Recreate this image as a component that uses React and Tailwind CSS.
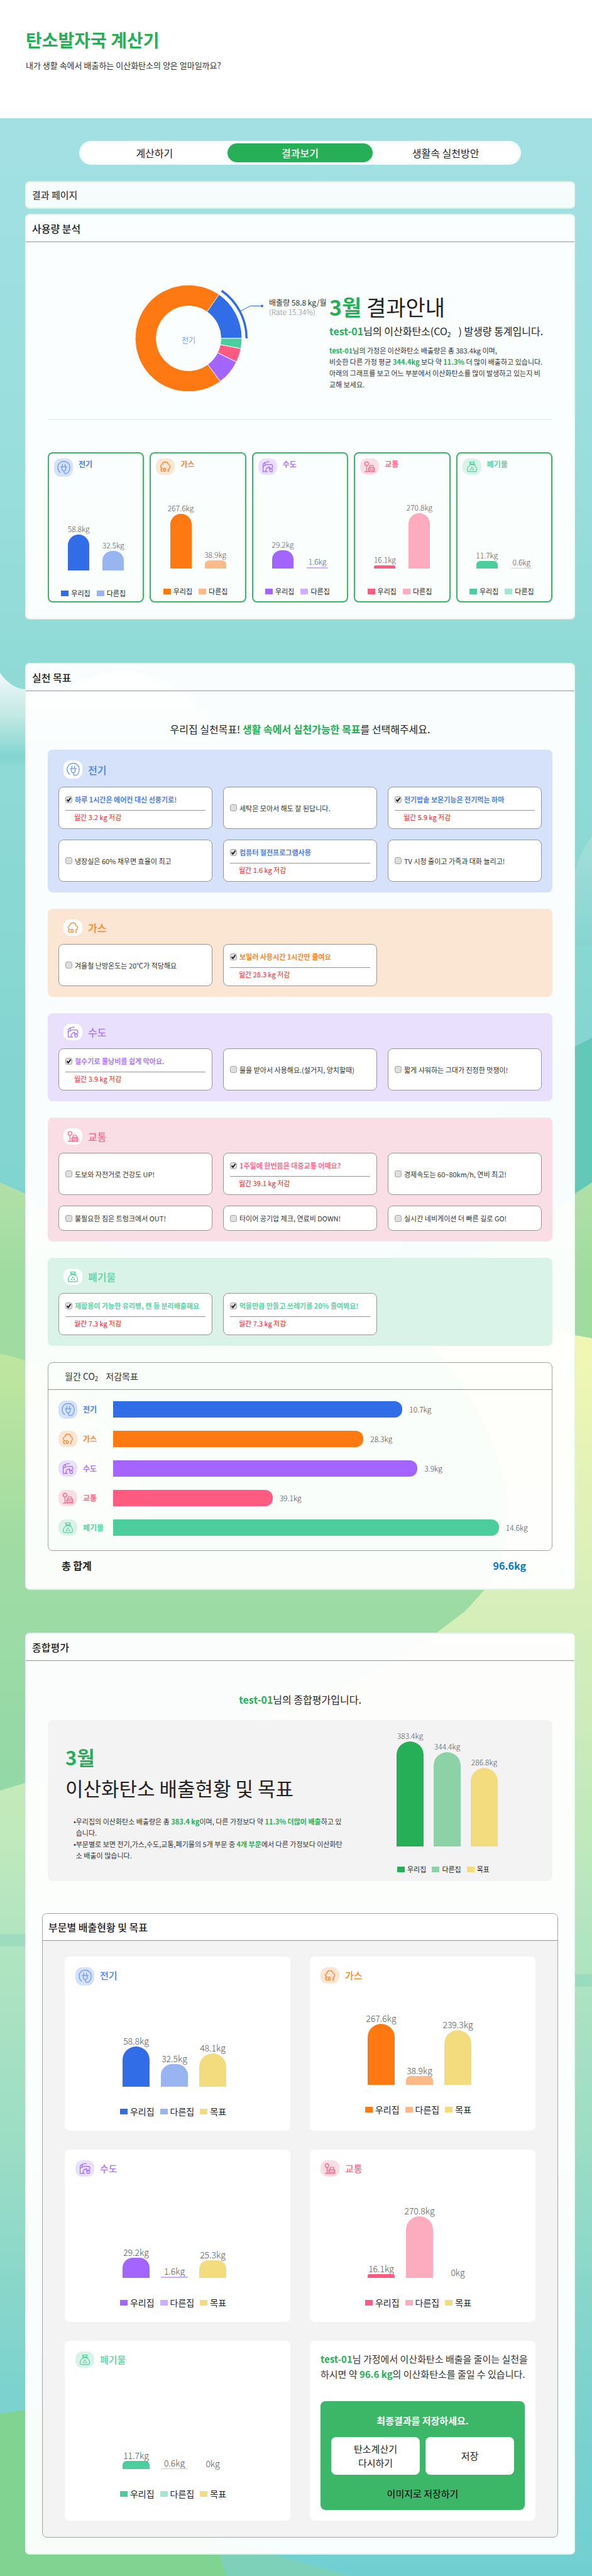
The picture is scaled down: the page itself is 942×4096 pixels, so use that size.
import React from "react";

const ICONS = {
  elec: (
    <>
      <path d="M5.6 20.6A11 11 0 1 1 23 12c0 6-3.4 11-7.6 11-2.6 0-3-2-3.2-4.6" />
      <path d="M9.6 6v4.2M14.4 6v4.2M6.5 10.5h11M8.500 10.500V14a3.500 3.500 0 0 0 3.500 3.800 3.500 3.500 0 0 0 3.500-3.800v-3.500" />
    </>
  ),
  gas: (
    <>
      <path d="M3.600 14.200C1 12.200 2.400 7.800 5.400 7.600 6 4 8.600 1.800 12 1.800s6 2.200 6.400 5.800c3.400.4 4.400 4.200 2.600 6.400-.4 1.400-.6 2-1.600 2.600" />
      <text x="1.500" y="23" fontSize="9" fontWeight="900" fill="currentColor" stroke="none">CO</text>
      <text x="16.300" y="22.600" fontSize="7" fontWeight="900" fill="currentColor" stroke="none">2</text>
    </>
  ),
  water: (
    <>
      <path d="M15 1.500C8.500 1.500 2 4.500 2 8.500V22.500h9.500M2 12.500C5.500 8.500 9.500 7 14 7.500h4.500c2.500 0 4 1.500 4 4v3.500h-7M6.500 10V4.500M8 22.500c0-6 2.500-9.500 7.500-10" />
      <circle cx="19" cy="19.800" r="3" />
      <path d="M15.500 12.500v4" />
    </>
  ),
  traffic: (
    <>
      <circle cx="5.800" cy="5.800" r="4" />
      <path d="M5.800 9.800V22M2 22.500h21M9.500 20v-4l2-2 1.600-4.600h6l1.600 4.600 2 2v4zM11.500 14h9.500M9.500 17h13.200M11 20v2M21 20v2" />
    </>
  ),
  waste: (
    <>
      <path d="M8.500 6.500 6.800 2h10.400l-2 4.500M7.500 7.800h9M9 5l3 1.600L17 5M8.500 8.500C4 11 2 14.500 2 18c0 3 1.400 4.500 4 4.500h12c2.600 0 4-1.500 4-4.500 0-3.500-2-7-6.500-9.500l3.500-1" />
      <path d="m10.700 14.500 1.300-2 1.500 2.200M9.200 16.300l-1 2h2.500M14.800 16.500l1 1.800h-2.600" />
    </>
  ),
};

const CATS = {
  elec: { name: "전기", text: "text-[#4a80ea]", icon: "text-[#6b9bf5]", soft: "bg-[#d5e2f9]", fill: "bg-[#306de6]", light: "bg-[#98b5f2]", tall: true },
  gas: { name: "가스", text: "text-[#ff8426]", icon: "text-[#ff7a14]", soft: "bg-[#fbe5d3]", fill: "bg-[#ff7912]", light: "bg-[#fdb987]" },
  water: { name: "수도", text: "text-[#ad75ff]", icon: "text-[#a564ff]", soft: "bg-[#e9e0fe]", fill: "bg-[#a464ff]", light: "bg-[#ceaeff]" },
  traffic: { name: "교통", text: "text-[#ff6a8d]", icon: "text-[#ff5a80]", soft: "bg-[#fadee5]", fill: "bg-[#ff5b80]", light: "bg-[#fdabbf]" },
  waste: { name: "폐기물", text: "text-[#5bd1a5]", icon: "text-[#4bcd9d]", soft: "bg-[#daf3e8]", fill: "bg-[#4bcd9d]", light: "bg-[#a3e5cd]" },
};

const GREEN = "font-bold text-[#26af57]";

function Badge({ cat, bg }) {
  const c = CATS[cat];
  return (
    <span className={`flex w-[30px] shrink-0 items-center justify-center rounded-[11px] ${c.tall ? "h-[29px]" : "h-[26px]"} ${bg || c.soft}`}>
      <svg viewBox="0 0 24 24" className={`${c.tall ? "size-[21px]" : "size-[18px]"} ${c.icon}`} fill="none" stroke="currentColor" strokeWidth="1.5" strokeLinecap="round" strokeLinejoin="round" aria-hidden="true">
        {ICONS[cat]}
      </svg>
    </span>
  );
}

function Bars({ bars, wide, gap, label, area }) {
  const w = wide ? 43 : 34;
  return (
    <div className={`flex items-end justify-center ${gap} ${area}`}>
      {bars.map(([value, h, color], i) => (
        <div key={i} className={`flex flex-col items-center ${wide ? "w-[43px]" : "w-[34px]"}`}>
          <span className={`whitespace-nowrap leading-4 font-light text-[#555] ${label}`}>{value}</span>
          <div
            className={`mt-px w-full ${color}`}
            style={{ height: h, borderTopLeftRadius: Math.min(w / 2, h / 2), borderTopRightRadius: Math.min(w / 2, h / 2) }}
          />
        </div>
      ))}
    </div>
  );
}

function Legend({ items, className }) {
  return (
    <ul className={`flex justify-center ${className}`}>
      {items.map(([name, color]) => (
        <li key={name} className="flex items-center gap-1 text-[#222]">
          <span className={`h-[9px] w-3 ${color}`} />
          {name}
        </li>
      ))}
    </ul>
  );
}

const USAGE = [
  ["elec", "58.8kg", 57, "32.5kg", 31],
  ["gas", "267.6kg", 87, "38.9kg", 13],
  ["water", "29.2kg", 29, "1.6kg", 2],
  ["traffic", "16.1kg", 5, "270.8kg", 88],
  ["waste", "11.7kg", 12, "0.6kg", 1],
];

const GOALS = [
  ["elec", [
    ["하루 1시간은 에어컨 대신 선풍기로!", "3.2"],
    ["세탁은 모아서 해도 잘 된답니다."],
    ["전기밥솥 보온기능은 전기먹는 하마", "5.9"],
    ["냉장실은 60% 채우면 효율이 최고"],
    ["컴퓨터 절전프로그램사용", "1.6"],
    ["TV 시청 줄이고 가족과 대화 늘리고!"],
  ]],
  ["gas", [["겨울철 난방온도는 20℃가 적당해요"], ["보일러 사용시간 1시간만 줄여요", "28.3"]]],
  ["water", [
    ["절수기로 물낭비를 쉽게 막아요.", "3.9"],
    ["물을 받아서 사용해요.(설거지, 양치할때)"],
    ["짧게 샤워하는 그대가 진정한 멋쟁이!"],
  ]],
  ["traffic", [
    ["도보와 자전거로 건강도 UP!"],
    ["1주일에 한번쯤은 대중교통 어때요?", "39.1"],
    ["경제속도는 60~80km/h, 연비 최고!"],
    ["불필요한 짐은 트렁크에서 OUT!"],
    ["타이어 공기압 체크, 연료비 DOWN!"],
    ["실시간 네비게이션 더 빠른 길로 GO!"],
  ]],
  ["waste", [
    ["재활용이 가능한 유리병, 캔 등 분리배출해요", "7.3"],
    ["먹을만큼 만들고 쓰레기를 20% 줄여봐요!", "7.3"],
  ]],
];

const REDUCTION = [
  ["elec", "10.7kg", 67.5],
  ["gas", "28.3kg", 58.4],
  ["water", "3.9kg", 71],
  ["traffic", "39.1kg", 37.2],
  ["waste", "14.6kg", 90],
];

const YELLOW = "bg-[#f3dc7d]";
const SECTORS = [
  ["elec", ["58.8kg", 64], ["32.5kg", 36], ["48.1kg", 53]],
  ["gas", ["267.6kg", 97], ["38.9kg", 14], ["239.3kg", 87]],
  ["water", ["29.2kg", 32], ["1.6kg", 2], ["25.3kg", 28]],
  ["traffic", ["16.1kg", 6], ["270.8kg", 98], ["0kg", 0]],
  ["waste", ["11.7kg", 13], ["0.6kg", 1], ["0kg", 0]],
];

function Goal({ id, cat, label, kg }) {
  return (
    <li className="flex min-h-[40px] flex-col justify-center rounded-lg border border-[#969696] bg-white px-[10px] text-[11px] leading-5">
      <div className={`flex items-center gap-1 whitespace-nowrap ${kg ? "pt-[9px]" : ""}`}>
        <span className="relative flex">
          <input id={id} type="checkbox" defaultChecked={!!kg} className="peer size-[11px] appearance-none rounded-[3px] border border-[#a8a8a8] bg-[#dedede]" />
          <svg viewBox="0 0 11 11" className="pointer-events-none absolute inset-0 hidden size-[11px] peer-checked:block" fill="none" stroke="#222" strokeWidth="2" aria-hidden="true">
            <path d="M2.500 5.500 4.600 8 8.600 2.500" />
          </svg>
        </span>
        <label htmlFor={id} className={kg ? `font-bold ${CATS[cat].text}` : "text-[#333]"}>{label}</label>
      </div>
      {kg && <p className="mt-[7px] border-t border-[#969696] pb-2 pl-[14px] text-[#fb1b1b]">월간 {kg} kg 저감</p>}
    </li>
  );
}

function Sub2() {
  return <sub className="mr-3 align-baseline text-[10px] leading-none">2</sub>;
}

function arc(a0, a1, ro, ri) {
  const p = (a, r) => {
    const t = (a * Math.PI) / 180;
    return `${(92 + r * Math.cos(t)).toFixed(2)} ${(98 - r * Math.sin(t)).toFixed(2)}`;
  };
  const big = a1 - a0 > 180 ? 1 : 0;
  return `M${p(a0, ro)}A${ro} ${ro} 0 ${big} 0 ${p(a1, ro)}L${p(a1, ri)}A${ri} ${ri} 0 ${big} 1 ${p(a0, ri)}Z`;
}

function Donut() {
  const slices = [
    [0, 55.2, "#306de6"],
    [55.2, 306.4, "#ff7912"],
    [306.4, 333.8, "#a464ff"],
    [333.8, 349, "#ff5b80"],
    [349, 360, "#4bcd9d"],
  ];
  return (
    <svg viewBox="0 0 316 200" className="h-[200px] w-[316px] shrink-0" role="img" aria-label="사용량 비율">
      {slices.map(([a, b, c]) => (
        <path key={c} d={arc(a, b, 85, 51.5)} fill={c} stroke="#fafefe" strokeWidth="1" />
      ))}
      <path d={arc(0, 55.2, 94, 90.5)} fill="#306de6" />
      <path d="M175 54.500 190.500 46.500H209" fill="none" stroke="#306de6" />
      <circle cx="209" cy="46.500" r="2" fill="#306de6" />
      <text x="92" y="106" fontSize="12" fontWeight="300" textAnchor="middle" fill="#306de6">전기</text>
      <text x="220" y="46" fontSize="12" fill="#333">배출량 58.8 kg/월</text>
      <text x="220" y="61" fontSize="12" fontWeight="300" fill="#888">(Rate 15.34%)</text>
    </svg>
  );
}

function Backdrop() {
  return (
    <svg viewBox="0 188 942 3908" preserveAspectRatio="none" className="absolute inset-0 h-full w-full" aria-hidden="true">
      <defs>
        <linearGradient id="sky" gradientUnits="userSpaceOnUse" x1="0" y1="188" x2="0" y2="1900">
          <stop offset="0" stopColor="#a2e0e4" />
          <stop offset=".25" stopColor="#9bdfdf" />
          <stop offset=".5" stopColor="#91dbd7" />
          <stop offset="1" stopColor="#80d4d0" />
        </linearGradient>
        <linearGradient id="mist" gradientUnits="userSpaceOnUse" x1="0" y1="1070" x2="0" y2="1217">
          <stop offset="0" stopColor="#f0f9f8" />
          <stop offset=".5" stopColor="#bde7e3" />
          <stop offset=".92" stopColor="#80d4d1" />
          <stop offset="1" stopColor="#8cd9d4" />
        </linearGradient>
        <linearGradient id="haze" gradientUnits="userSpaceOnUse" x1="0" y1="1330" x2="0" y2="1503">
          <stop offset="0" stopColor="#a3ded9" />
          <stop offset="1" stopColor="#86d5d1" />
        </linearGradient>
        <linearGradient id="field" gradientUnits="userSpaceOnUse" x1="0" y1="1880" x2="0" y2="2850">
          <stop offset="0" stopColor="#b1e0a7" />
          <stop offset=".15" stopColor="#a0dca0" />
          <stop offset=".6" stopColor="#a0dca4" />
          <stop offset="1" stopColor="#93d8a7" />
        </linearGradient>
        <linearGradient id="knoll" gradientUnits="userSpaceOnUse" x1="0" y1="2153" x2="0" y2="2480">
          <stop offset="0" stopColor="#c0e69f" />
          <stop offset="1" stopColor="#9edba3" />
        </linearGradient>
        <linearGradient id="meadow" gradientUnits="userSpaceOnUse" x1="0" y1="2128" x2="0" y2="4096">
          <stop offset="0" stopColor="#f1f7b2" />
          <stop offset=".2" stopColor="#d9efba" />
          <stop offset=".4" stopColor="#c0e9bc" />
          <stop offset=".48" stopColor="#b2e5c0" />
          <stop offset=".65" stopColor="#9cddc5" />
          <stop offset=".84" stopColor="#7dd3ce" />
          <stop offset="1" stopColor="#70cfd1" />
        </linearGradient>
      </defs>
      <rect y="188" width="942" height="1900" fill="url(#sky)" />
      <path d="M0 1070C12 1086 24 1095 40 1096c60 6 100-27 155-27 100 0 130 80 230 148H0z" fill="url(#mist)" />
      <path d="M942 1330C930 1345 920 1366 915 1385L890 1503H942z" fill="url(#haze)" />
      <path d="M942 1650 915 1664C800 1760 600 1950 560 2200H942z" fill="#62c8b7" />
      <path d="M0 1880 40 1898C260 2090 700 2090 915 1898L942 1880V3000H0z" fill="url(#field)" />
      <path d="M0 2153C30 2156 200 2200 260 2480H0z" fill="url(#knoll)" />
      <path d="M942 2128 915 2123C850 2100 700 2070 600 2060 760 2180 870 2400 771 2528L740 2562 695 2596C500 2740 200 2790 40 2835L0 2847V4096H942z" fill="url(#meadow)" />
      <path d="M0 3075H60V3095H0zM890 3139H942V3159H890z" fill="#84d3bf" opacity=".45" />
      <path d="M0 3838 40 3832C230 3800 340 3980 350 4062L360 4096H0z" fill="#80d391" />
      <path d="M350 4062 360 4096H559L436 4062C400 4050 380 4046 345 4044z" fill="#7ed1b9" />
    </svg>
  );
}

const PANEL = "rounded-[7px] border border-t-2 border-b-2 border-[#e2f3ea] bg-white/95";
const PANEL_TITLE = "flex items-center border-b border-[#929898] pl-[10px] text-[16px] font-medium text-[#1c1c1c]";

export default function App() {
  return (
    <div className="font-['Noto_Sans_CJK_KR','Noto_Sans',sans-serif] text-[#222]">
      <header className="h-[188px] bg-white pt-[43px] pl-[41px]">
        <h1 className="text-[28px] leading-10 font-bold text-[#26af57]">탄소발자국 계산기</h1>
        <p className="mt-[11px] text-[13px] leading-5 text-[#333]">내가 생활 속에서 배출하는 이산화탄소의 양은 얼마일까요?</p>
      </header>

      <div className="relative">
        <Backdrop />
        <main className="relative pt-9 pr-[27px] pb-[34px] pl-[40px]">
          <nav className="mx-auto grid max-w-[703px] grid-cols-3 rounded-[19px] bg-white/90 p-1 text-center text-[16px] leading-[30px]">
            <a href="#calc" className="rounded-[15px] bg-white">계산하기</a>
            <a href="#result" className="rounded-[15px] bg-[#26af57] font-medium text-white">결과보기</a>
            <a href="#tips" className="rounded-[15px] bg-white">생활속 실천방안</a>
          </nav>

          <h2 className="mt-[26px] flex h-[44px] items-center rounded-[7px] border border-t-2 border-b-2 border-[#dff0df] bg-white/90 pl-[10px] text-[15px] font-medium text-[#444]">결과 페이지</h2>

          <section className={`mt-2 ${PANEL}`}>
            <h2 className={`${PANEL_TITLE} h-[43px]`}>사용량 분석</h2>
            <div className="px-[35px] pb-[25px]">
              <div className="flex border-b-2 border-[#e6f3f2]">
                <div className="flex w-[448px] shrink-0 justify-end pt-[55px]">
                  <Donut />
                </div>
                <div className="pt-[81px] pb-[46px] whitespace-nowrap">
                  <h3 className="text-[34px] leading-[44px]"><b className={GREEN}>3월</b> 결과안내</h3>
                  <p className="mt-1 text-[16px] leading-6"><b className={GREEN}>test-01</b>님의 이산화탄소(CO<Sub2 />) 발생량 통계입니다.</p>
                  <p className="mt-[10px] text-[11px] leading-[18px] text-[#333]">
                    <b className={GREEN}>test-01</b>님의 가정은 이산화탄소 배출량은 총 383.4kg 이며,<br />
                    비슷한 다른 가정 평균 <b className={GREEN}>344.4kg</b> 보다 약 <b className={GREEN}>11.3%</b> 더 많이 배출하고 있습니다.<br />
                    아래의 그래프를 보고 어느 부분에서 이산화탄소를 많이 발생하고 있는지 비<br />
                    교해 보세요.
                  </p>
                </div>
              </div>
              <div className="mt-[51px] grid grid-cols-5 gap-[9px]">
                {USAGE.map(([cat, v1, h1, v2, h2]) => (
                  <article key={cat} className="h-[239px] rounded-[8px] border-2 border-[#3bb566] p-2">
                    <div className="flex items-start gap-[9px]">
                      <Badge cat={cat} />
                      <h4 className={`text-[12px] leading-[18px] font-bold ${CATS[cat].text}`}>{CATS[cat].name}</h4>
                    </div>
                    <Bars gap="gap-[21px]" label="text-[12px]" area="h-[149px]" bars={[[v1, h1, CATS[cat].fill], [v2, h2, CATS[cat].light]]} />
                    <Legend className="mt-7 gap-[10px] pr-2 text-[11px] leading-4" items={[["우리집", CATS[cat].fill], ["다른집", CATS[cat].light]]} />
                  </article>
                ))}
              </div>
            </div>
          </section>

          <section className={`mt-[69px] ${PANEL}`}>
            <h2 className={`${PANEL_TITLE} h-[43px]`}>실천 목표</h2>
            <div className="px-[35px] pb-[25px]">
              <p className="pt-[48px] text-center text-[16px] leading-6">우리집 실천목표! <b className={GREEN}>생활 속에서 실천가능한 목표</b>를 선택해주세요.</p>
              <div className="mt-[21px] flex flex-col gap-[26px]">
                {GOALS.map(([cat, list]) => (
                  <section key={cat} className={`rounded-lg p-[17px] ${CATS[cat].soft}`}>
                    <div className="flex items-center gap-[9px] pl-2">
                      <Badge cat={cat} bg="bg-white" />
                      <h3 className={`text-[16px] leading-6 font-medium ${CATS[cat].text}`}>{CATS[cat].name}</h3>
                    </div>
                    <ul className="mt-[13px] grid grid-cols-3 gap-[17px]">
                      {list.map(([label, kg], i) => (
                        <Goal key={label} id={`${cat}-${i}`} cat={cat} label={label} kg={kg} />
                      ))}
                    </ul>
                  </section>
                ))}
                <section className="rounded-lg border border-[#a0a4a2]">
                  <h3 className="flex h-[43px] items-center border-b border-[#929898] pl-[26px] text-[14px] text-[#333]">
                    <span>월간 CO<Sub2 />저감목표</span>
                  </h3>
                  <ul className="flex flex-col gap-[21px] pt-[18px] pr-4 pb-[23px] pl-4">
                    {REDUCTION.map(([cat, v, pct]) => (
                      <li key={cat} className="flex h-[26px] items-center">
                        <Badge cat={cat} />
                        <span className={`ml-[9px] w-12 text-[12px] font-bold ${CATS[cat].text}`}>{CATS[cat].name}</span>
                        <div className="flex h-full flex-1 items-center">
                          <div className={`h-full rounded-r-[12px] ${CATS[cat].fill}`} style={{ width: `${pct}%` }} />
                          <span className="ml-[11px] text-[12px] font-light text-[#444]">{v}</span>
                        </div>
                      </li>
                    ))}
                  </ul>
                </section>
              </div>
              <div className="mt-[11px] flex justify-between pr-[42px] pl-[22px] text-[16px] leading-6 font-bold">
                <span>총 합계</span>
                <span className="text-[#0878c8]">96.6kg</span>
              </div>
            </div>
          </section>

          <section className={`mt-[68px] ${PANEL}`}>
            <h2 className={`${PANEL_TITLE} h-[43px]`}>종합평가</h2>
            <div className="px-[35px] pb-[25px]">
              <p className="pt-[49px] text-center text-[16px] leading-6"><b className={GREEN}>test-01</b>님의 종합평가입니다.</p>
              <div className="mt-[21px] flex justify-between rounded-lg bg-[#f3f3f3] pr-[87px] pl-7">
                <div className="pt-[37px] pb-8 whitespace-nowrap">
                  <h3 className="text-[31px] leading-[44px]">
                    <b className={`block ${GREEN}`}>3월</b>
                    <span className="mt-[5px] block">이산화탄소 배출현황 및 목표</span>
                  </h3>
                  <ul className="mt-[22px] pl-[13px] text-[11px] leading-[18px] text-[#333]">
                    <li className="flex"><span>•</span><span>우리집의 이산화탄소 배출량은 총 <b className={GREEN}>383.4 kg</b>이며, 다른 가정보다 약 <b className={GREEN}>11.3% 더많이 배출</b>하고 있<br />습니다.</span></li>
                    <li className="flex"><span>•</span><span>부문별로 보면 전기,가스,수도,교통,폐기물의 5개 부문 중 <b className={GREEN}>4개 부문</b>에서 다른 가정보다 이산화탄<br />소 배출이 많습니다.</span></li>
                  </ul>
                </div>
                <div className="flex flex-col justify-end pb-[11px]">
                  <Bars wide gap="gap-4" label="text-[12px]" area="" bars={[["383.4kg", 167, "bg-[#26af57]"], ["344.4kg", 150, "bg-[#8dd2a7]"], ["286.8kg", 125, YELLOW]]} />
                  <Legend className="mt-7 gap-[9px] pr-3 text-[11px] leading-4" items={[["우리집", "bg-[#26af57]"], ["다른집", "bg-[#8dd2a7]"], ["목표", YELLOW]]} />
                </div>
              </div>

              <section className="-mx-[9px] mt-[51px] overflow-hidden rounded-lg border border-[#a0a4a2] bg-[#f3f3f3]">
                <h3 className="flex h-[43px] items-center border-b border-[#929898] bg-white pl-[9px] text-[16px] font-medium">부문별 배출현황 및 목표</h3>
                <div className="grid grid-cols-2 gap-x-[31px] gap-y-[30px] px-[35px] pt-[25px] pb-[26px]">
                  {SECTORS.map(([cat, a, b, c]) => (
                    <article key={cat} className="rounded-lg bg-white px-[17px] pt-[17px] pb-[21px]">
                      <div className="flex items-start gap-[9px]">
                        <Badge cat={cat} />
                        <h4 className={`text-[15px] leading-[26px] font-medium ${CATS[cat].text}`}>{CATS[cat].name}</h4>
                      </div>
                      <Bars wide gap="gap-[18px] pr-[10px]" label="text-[14px]" area="h-[161px]" bars={[[...a, CATS[cat].fill], [...b, CATS[cat].light], [...c, YELLOW]]} />
                      <Legend className="mt-[29px] gap-[9px] pr-[14px] text-[14px] leading-5" items={[["우리집", CATS[cat].fill], ["다른집", CATS[cat].light], ["목표", YELLOW]]} />
                    </article>
                  ))}
                  <article className="rounded-lg bg-white p-[17px]">
                    <p className="text-[15px] leading-6 whitespace-nowrap text-[#333]">
                      <b className={GREEN}>test-01</b>님 가정에서 이산화탄소 배출을 줄이는 실천을<br />
                      하시면 약 <b className={GREEN}>96.6 kg</b>의 이산화탄소를 줄일 수 있습니다.
                    </p>
                    <div className="mt-[31px] rounded-lg bg-[#3cb768] px-[17px] pt-[19px] pb-[14px] text-center text-[15px] leading-6">
                      <p className="font-bold text-white">최종결과를 저장하세요.</p>
                      <div className="mt-[14px] grid grid-cols-2 gap-[9px] leading-[22px]">
                        <button type="button" className="h-[60px] rounded-lg bg-white">탄소계산기<br />다시하기</button>
                        <button type="button" className="h-[60px] rounded-lg bg-white">저장</button>
                      </div>
                      <button type="button" className="mt-[18px] text-black">이미지로 저장하기</button>
                    </div>
                  </article>
                </div>
              </section>
            </div>
          </section>
        </main>
      </div>
    </div>
  );
}
